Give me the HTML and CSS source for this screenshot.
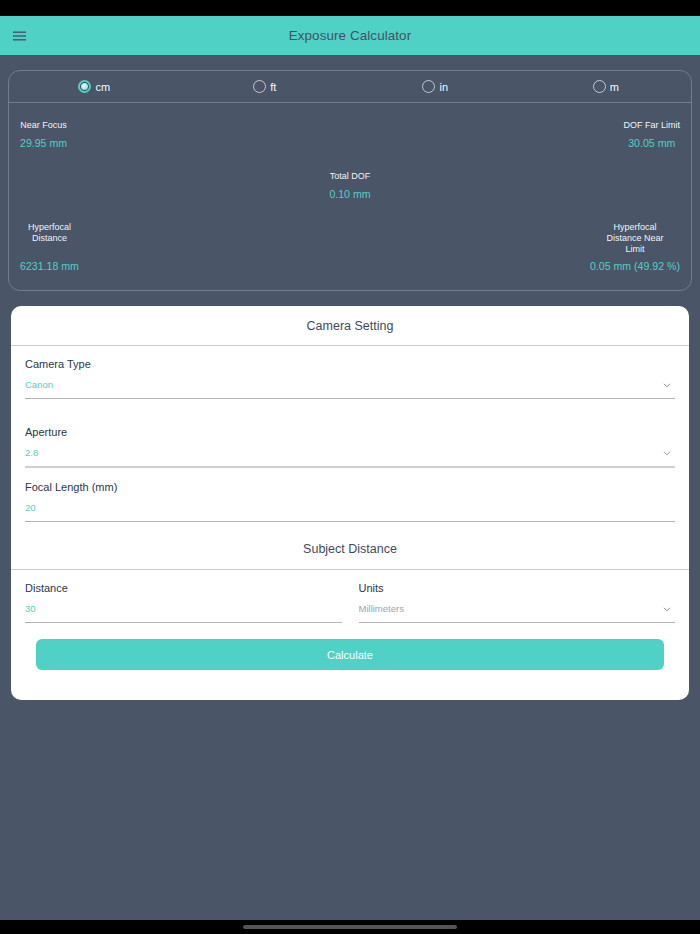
FILE: index.html
```html
<!DOCTYPE html>
<html lang="en">
<head>
<meta charset="utf-8">
<title>Exposure Calculator</title>
<link rel="stylesheet" href="styles.css">
</head>
<body>
<div class="statusbar"></div>
<header class="topbar">
  <div class="topbar-left">
    <svg class="menu-icon" width="13" height="10" viewBox="0 0 13 10" aria-hidden="true">
      <rect x="0" y="0.5" width="13" height="1.4" fill="#4a5568"/>
      <rect x="0" y="4.3" width="13" height="1.4" fill="#4a5568"/>
      <rect x="0" y="8.1" width="13" height="1.4" fill="#4a5568"/>
    </svg>
  </div>
  <h1 class="title">Exposure Calculator</h1>
  <div></div>
</header>
<main class="content">
  <section class="results">
    <div class="units">
      <label class="unit"><span class="radio radio-on"></span><span>cm</span></label>
      <label class="unit"><span class="radio"></span><span>ft</span></label>
      <label class="unit"><span class="radio"></span><span>in</span></label>
      <label class="unit"><span class="radio"></span><span>m</span></label>
    </div>
    <div class="stats">
      <div class="stat-row">
        <div class="stat">
          <div class="stat-label">Near Focus</div>
          <div class="stat-value">29.95 mm</div>
        </div>
        <div class="stat">
          <div class="stat-label">DOF Far Limit</div>
          <div class="stat-value">30.05 mm</div>
        </div>
      </div>
      <div class="stat-row stat-row-center">
        <div class="stat">
          <div class="stat-label">Total DOF</div>
          <div class="stat-value">0.10 mm</div>
        </div>
      </div>
      <div class="stat-row stat-row-last">
        <div class="stat stat-tall">
          <div class="stat-label stat-label-wrap">Hyperfocal Distance</div>
          <div class="stat-value">6231.18 mm</div>
        </div>
        <div class="stat stat-tall">
          <div class="stat-label stat-label-wrap">Hyperfocal Distance Near Limit</div>
          <div class="stat-value">0.05 mm (49.92 %)</div>
        </div>
      </div>
    </div>
  </section>

  <section class="card">
    <div class="card-head">Camera Setting</div>
    <div class="field field-first">
      <div class="field-label">Camera Type</div>
      <div class="field-input">
        <span class="field-value">Canon</span>
        <svg class="chevron" width="8" height="5" viewBox="0 0 8 5" aria-hidden="true"><polyline points="0.8,0.8 4,3.8 7.2,0.8" fill="none" stroke="#9a9a9a" stroke-width="1"/></svg>
      </div>
    </div>
    <div class="field field-aperture">
      <div class="field-label">Aperture</div>
      <div class="field-input field-input-focus">
        <span class="field-value">2.8</span>
        <svg class="chevron" width="8" height="5" viewBox="0 0 8 5" aria-hidden="true"><polyline points="0.8,0.8 4,3.8 7.2,0.8" fill="none" stroke="#9a9a9a" stroke-width="1"/></svg>
      </div>
    </div>
    <div class="field field-focal">
      <div class="field-label">Focal Length (mm)</div>
      <div class="field-input">
        <span class="field-value">20</span>
      </div>
    </div>
    <div class="card-head card-head-sub">Subject Distance</div>
    <div class="field-pair">
      <div class="field-col">
        <div class="field-label">Distance</div>
        <div class="field-input">
          <span class="field-value">30</span>
        </div>
      </div>
      <div class="field-col">
        <div class="field-label">Units</div>
        <div class="field-input">
          <span class="field-value field-value-muted">Millimeters</span>
          <svg class="chevron" width="8" height="5" viewBox="0 0 8 5" aria-hidden="true"><polyline points="0.8,0.8 4,3.8 7.2,0.8" fill="none" stroke="#9a9a9a" stroke-width="1"/></svg>
        </div>
      </div>
    </div>
    <button class="calc-btn" type="button">Calculate</button>
  </section>
</main>
<div class="homebar"><span class="home-indicator"></span></div>
</body>
</html>
```

FILE: styles.css
```css
* { box-sizing: border-box; }

html, body {
  margin: 0;
  padding: 0;
}

body {
  height: 934px;
  display: flex;
  flex-direction: column;
  background: #4a5568;
  font-family: "Liberation Sans", Arial, sans-serif;
  overflow: hidden;
}

.statusbar {
  height: 16px;
  background: #000;
  flex: none;
}

.topbar {
  height: 39px;
  flex: none;
  background: #4fd1c5;
  display: grid;
  grid-template-columns: 1fr auto 1fr;
  align-items: center;
}

.topbar-left {
  padding-left: 13px;
  display: flex;
  align-items: center;
  padding-top: 1px;
}

.menu-icon { display: block; }

.title {
  margin: 0;
  font-size: 13.4px;
  font-weight: normal;
  color: #445064;
  letter-spacing: 0.1px;
}

.content {
  flex: 1;
  padding-top: 15px;
}

/* results panel */
.results {
  margin: 0 8px;
  border: 1px solid #717c91;
  border-radius: 12px;
}

.units {
  height: 32px;
  display: grid;
  grid-template-columns: repeat(4, 1fr);
  border-bottom: 1px solid #717c91;
}

.unit {
  display: flex;
  align-items: center;
  justify-content: center;
  gap: 4px;
  color: #f7fafc;
  font-size: 11px;
}

.radio {
  width: 13px;
  height: 13px;
  border-radius: 50%;
  border: 1px solid #c3cad4;
  display: flex;
  align-items: center;
  justify-content: center;
}

.radio-on {
  border: 2px solid #4fd1c5;
  background: #3f4a5c;
}

.radio-on::after {
  content: "";
  width: 7px;
  height: 7px;
  border-radius: 50%;
  background: radial-gradient(circle at 45% 40%, #f0fffc 0%, #9ae6dd 60%, #6fd8cd 100%);
}

.stats {
  padding: 17px 11px 17px;
}

.stat-row {
  display: flex;
  justify-content: space-between;
}

.stat-row-center {
  justify-content: center;
  margin-top: 21px;
}

.stat-row-last {
  margin-top: 21px;
  align-items: stretch;
}

.stat {
  display: flex;
  flex-direction: column;
  align-items: center;
}

.stat-label {
  font-size: 9px;
  line-height: 11px;
  color: #f1f4f8;
  text-align: center;
}

.stat-label-wrap {
  max-width: 58px;
}

.stat-value {
  margin-top: 6px;
  font-size: 10.6px;
  line-height: 13px;
  color: #4fd1c5;
  white-space: nowrap;
}

.stat-tall .stat-value {
  margin-top: auto;
  padding-top: 5px;
}

/* card */
.card {
  margin: 15px 11px 0;
  background: #fff;
  border-radius: 10px;
  padding-bottom: 30px;
}

.card-head {
  padding: 13px 0 11px;
  line-height: 15px;
  font-size: 12.5px;
  color: #3f4a5e;
  text-align: center;
  border-bottom: 1px solid #c6ced9;
}

.card-head-sub {
  padding: 20px 0 12px;
}

.field {
  padding: 0 14px;
}

.field-first { padding-top: 11px; }
.field-aperture { margin-top: 26px; }
.field-focal { margin-top: 12px; }

.field-label {
  font-size: 11px;
  line-height: 14px;
  color: #2d3748;
}

.field-input {
  margin-top: 8px;
  padding: 0 4px 7px 0;
  display: flex;
  align-items: center;
  justify-content: space-between;
  border-bottom: 1px solid #b4b4b4;
  box-sizing: content-box;
  height: 12px;
}

.field-input-focus {
  border-bottom: 2px solid #d0d0d0;
}

.field-value {
  font-size: 9.5px;
  line-height: 12px;
  color: #4fd1c5;
}

.field-value-muted {
  color: #97a3b6;
}

.chevron { display: block; }

.field-pair {
  margin-top: 11px;
  padding: 0 14px;
  display: grid;
  grid-template-columns: 1fr 1fr;
  column-gap: 17px;
}

.calc-btn {
  display: block;
  width: calc(100% - 50px);
  margin: 16px 25px 0;
  height: 31px;
  border: none;
  border-radius: 6px;
  background: #4fd1c5;
  color: #fff;
  font-family: "Liberation Sans", Arial, sans-serif;
  font-size: 11px;
  padding: 0;
}

/* bottom home bar */
.homebar {
  height: 14px;
  flex: none;
  background: #000;
  display: flex;
  justify-content: center;
  padding-top: 5px;
}

.home-indicator {
  width: 214px;
  height: 4px;
  border-radius: 2px;
  background: #555;
}
```
